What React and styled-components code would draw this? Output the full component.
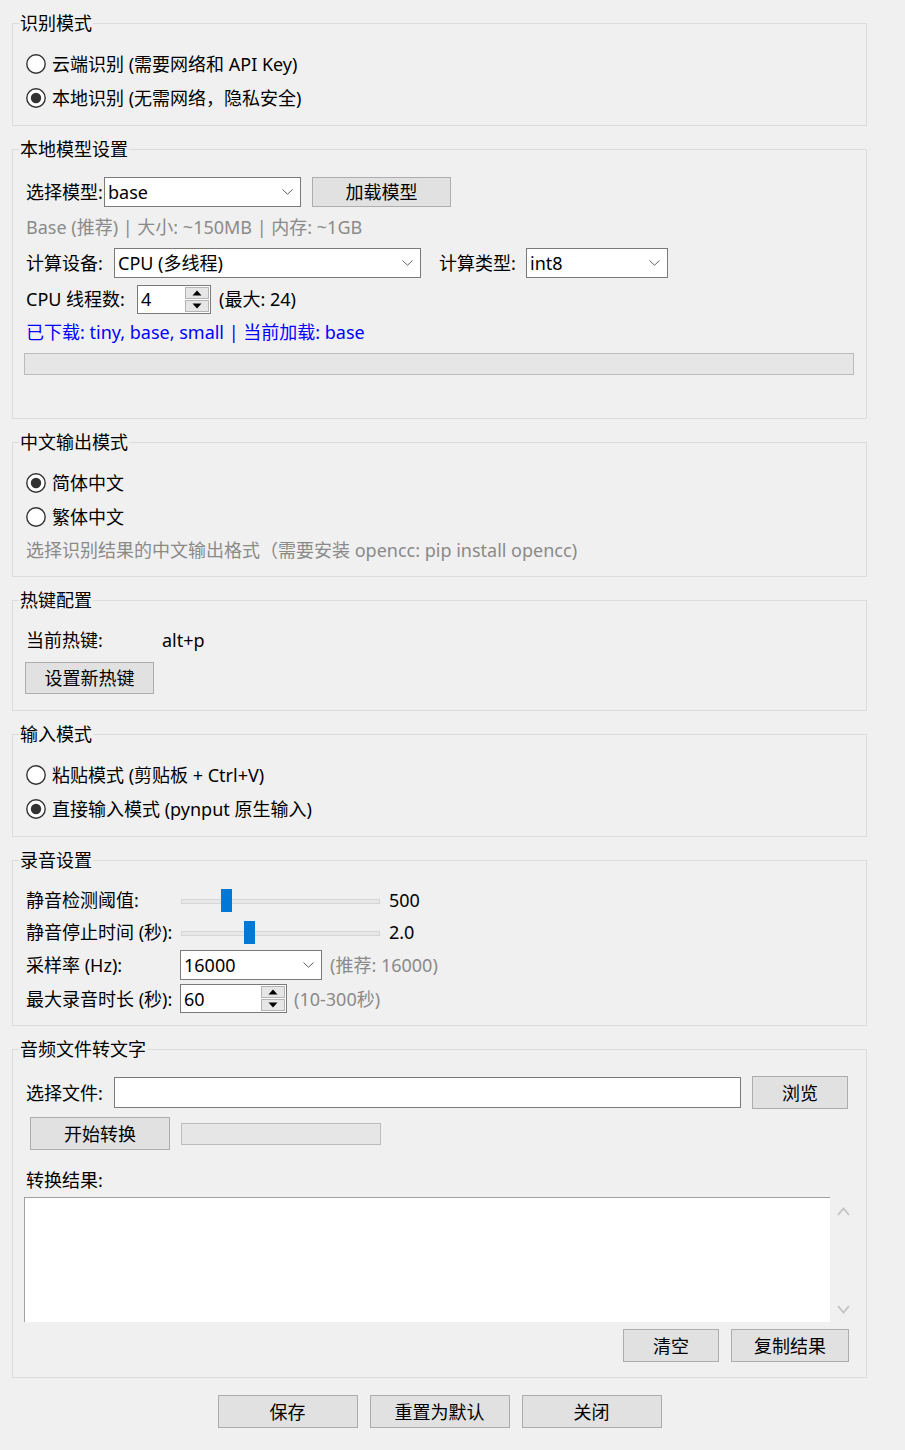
import React from "react";
import styled, { createGlobalStyle } from "styled-components";

const Global = createGlobalStyle`
  html, body { margin: 0; padding: 0; background: #f0f0f0; }
  body {
    font-family: "Noto Sans", "Noto Sans CJK SC", sans-serif;
    font-size: 18px;
    color: #000;
  }
  * { box-sizing: border-box; }
`;

const Page = styled.div`
  width: 905px;
  min-height: 1450px;
  padding: 14px 0 0 12px;
  background: #f0f0f0;
`;

const Frames = styled.div`
  width: 855px;
  display: flex;
  flex-direction: column;
  gap: 14px;
`;

const Group = styled.fieldset`
  margin: 0;
  padding: 0;
  min-width: 0;
  border: 1px solid #dcdcdc;
`;

const Legend = styled.legend`
  margin-left: 6px;
  padding: 0 1px;
  height: 18px;
  font-size: 18px;
  line-height: 18px;
  white-space: nowrap;
`;

const Body = styled.div`
  display: flex;
  flex-direction: column;
  padding: ${(p) => p.$pt}px ${(p) => p.$pr ?? 12}px ${(p) => p.$pb}px 12px;
`;

const Row = styled.div`
  display: flex;
  align-items: center;
  height: ${(p) => p.$h ?? 30}px;
  margin-top: ${(p) => p.$mt ?? 0}px;
  margin-left: ${(p) => p.$ml ?? 0}px;
  justify-content: ${(p) => p.$justify ?? "flex-start"};
  gap: ${(p) => p.$gap ?? 0}px;
  line-height: 24px;
  white-space: nowrap;
`;

const Label = styled.span`
  flex: none;
  width: ${(p) => (p.$w ? `${p.$w}px` : "auto")};
  margin-left: ${(p) => p.$ml ?? 0}px;
  padding-left: 1px;
  white-space: nowrap;
`;

const Hint = styled.span`
  color: ${(p) => (p.$blue ? "#0000ff" : "#8a8a8a")};
  margin-left: ${(p) => p.$ml ?? 0}px;
  white-space: nowrap;
`;

const TextLine = styled.div`
  height: 24px;
  line-height: 24px;
  margin-top: ${(p) => p.$mt ?? 0}px;
  padding-left: 1px;
  color: ${(p) => (p.$blue ? "#0000ff" : p.$gray ? "#8a8a8a" : "#000")};
  white-space: nowrap;
`;

const RadioRow = styled.label`
  display: flex;
  align-items: center;
  gap: 6px;
  height: 34px;
  padding-left: 1px;
  line-height: 24px;
  white-space: nowrap;
`;

const RadioDot = ({ checked }) => (
  <svg width="20" height="20" viewBox="0 0 20 20" style={{ flex: "none" }}>
    <circle cx="10" cy="10" r="9.2" fill="#fff" stroke="#333" strokeWidth="1.4" />
    {checked && <circle cx="10" cy="10" r="5.2" fill="#333" />}
  </svg>
);

const Radio = ({ checked, children }) => (
  <RadioRow>
    <RadioDot checked={checked} />
    <span>{children}</span>
  </RadioRow>
);

const ComboBox = styled.div`
  flex: none;
  width: ${(p) => p.$w}px;
  height: 30px;
  background: #fff;
  border: 1px solid #7a7a7a;
  display: flex;
  align-items: center;
  justify-content: space-between;
  padding: 0 7px 0 3px;
`;

const Chevron = () => (
  <svg width="11" height="6" viewBox="0 0 11 6">
    <path d="M0.5 0.5 L5.5 5.2 L10.5 0.5" fill="none" stroke="#606060" strokeWidth="1" />
  </svg>
);

const Combo = ({ w, value }) => (
  <ComboBox $w={w}>
    <span>{value}</span>
    <Chevron />
  </ComboBox>
);

const SpinBox = styled.div`
  flex: none;
  width: ${(p) => p.$w}px;
  height: 29px;
  background: #fff;
  border: 1px solid #7a7a7a;
  display: flex;
  align-items: stretch;
  padding: 0 1px 0 3px;
`;

const SpinValue = styled.span`
  flex: 1;
  display: flex;
  align-items: center;
`;

const SpinButtons = styled.div`
  flex: none;
  width: 24px;
  display: flex;
  flex-direction: column;
  gap: 1px;
  padding: 1px 0;
`;

const SpinBtn = styled.div`
  flex: 1;
  background: #e6e6e6;
  border: 1px solid #b4b4b4;
  display: flex;
  align-items: center;
  justify-content: center;
`;

const Triangle = ({ up }) => (
  <svg width="10" height="6" viewBox="0 0 10 6">
    <path d={up ? "M0.5 5.5 L5 0.5 L9.5 5.5 Z" : "M0.5 0.5 L5 5.5 L9.5 0.5 Z"} fill="#000" />
  </svg>
);

const Spin = ({ w, value }) => (
  <SpinBox $w={w}>
    <SpinValue>{value}</SpinValue>
    <SpinButtons>
      <SpinBtn>
        <Triangle up />
      </SpinBtn>
      <SpinBtn>
        <Triangle />
      </SpinBtn>
    </SpinButtons>
  </SpinBox>
);

const Button = styled.button`
  flex: none;
  width: ${(p) => p.$w}px;
  height: ${(p) => p.$h ?? 33}px;
  margin-left: ${(p) => p.$ml ?? 0}px;
  background: #e1e1e1;
  border: 1px solid #adadad;
  border-radius: 0;
  padding: 0;
  font-family: inherit;
  font-size: 18px;
  line-height: 24px;
  color: #000;
  white-space: nowrap;
`;

const Progress = styled.div`
  flex: none;
  width: ${(p) => (p.$w ? `${p.$w}px` : "auto")};
  height: 22px;
  margin-top: ${(p) => p.$mt ?? 0}px;
  margin-left: ${(p) => p.$ml ?? 0}px;
  background: #e6e6e6;
  border: 1px solid #bcbcbc;
`;

const SliderTrack = styled.div`
  flex: none;
  position: relative;
  width: ${(p) => p.$w}px;
  height: 23px;
  margin-right: 9px;
  &::before {
    content: "";
    position: absolute;
    left: 0;
    right: 0;
    top: 10px;
    height: 3px;
    background: #e7e7e7;
    border: 1px solid #d6d6d6;
  }
`;

const SliderThumb = styled.div`
  position: absolute;
  top: 0;
  width: 11px;
  height: 23px;
  background: #0078d7;
`;

const Slider = ({ w, frac }) => (
  <SliderTrack $w={w}>
    <SliderThumb style={{ left: `${Math.round(frac * (w - 11))}px` }} />
  </SliderTrack>
);

const Entry = styled.div`
  flex: none;
  width: ${(p) => p.$w}px;
  height: 31px;
  background: #fff;
  border: 1px solid #7a7a7a;
`;

const TextWrap = styled.div`
  display: flex;
  height: 125px;
  margin: 5px -8px 0 -1px;
`;

const TextArea = styled.div`
  flex: 1;
  background: #fff;
  border-top: 1px solid #a0a0a0;
  border-left: 1px solid #a0a0a0;
`;

const ScrollBar = styled.div`
  flex: none;
  width: 27px;
  display: flex;
  flex-direction: column;
  align-items: center;
  justify-content: space-between;
  padding: 10px 0 8px;
`;

const ScrollArrow = ({ up }) => (
  <svg width="13" height="9" viewBox="0 0 13 9">
    <path
      d={up ? "M1 8 L6.5 1.5 L12 8" : "M1 1 L6.5 7.5 L12 1"}
      fill="none"
      stroke="#c4c4c4"
      strokeWidth="1.8"
    />
  </svg>
);

const Footer = styled.div`
  width: 855px;
  display: flex;
  justify-content: center;
  gap: 12px;
  margin-top: 17px;
`;

export default function App() {
  const thresholdFrac = (500 - 100) / (2000 - 100);
  const silenceFrac = (2.0 - 0.5) / (5.0 - 0.5);
  return (
    <Page>
      <Global />
      <Frames>
        <Group>
          <Legend>识别模式</Legend>
          <Body $pt={15} $pb={10}>
            <Radio>云端识别 (需要网络和 API Key)</Radio>
            <Radio checked>本地识别 (无需网络，隐私安全)</Radio>
          </Body>
        </Group>

        <Group>
          <Legend>本地模型设置</Legend>
          <Body $pt={18} $pb={43}>
            <Row $h={31}>
              <Label $w={79}>选择模型:</Label>
              <Combo w={197} value="base" />
              <Button $w={139} $h={30} $ml={11}>
                加载模型
              </Button>
            </Row>
            <TextLine $mt={8} $gray>
              Base (推荐) | 大小: ~150MB | 内存: ~1GB
            </TextLine>
            <Row $h={31} $mt={8}>
              <Label $w={89}>计算设备:</Label>
              <Combo w={307} value="CPU (多线程)" />
              <Label $w={88} $ml={17}>
                计算类型:
              </Label>
              <Combo w={142} value="int8" />
            </Row>
            <Row $h={30} $mt={6}>
              <Label $w={112}>CPU 线程数:</Label>
              <Spin w={74} value="4" />
              <Label $ml={7}>(最大: 24)</Label>
            </Row>
            <TextLine $mt={6} $blue>
              已下载: tiny, base, small | 当前加载: base
            </TextLine>
            <Progress $mt={9} $ml={-1} />
          </Body>
        </Group>

        <Group>
          <Legend>中文输出模式</Legend>
          <Body $pt={15} $pb={14}>
            <Radio checked>简体中文</Radio>
            <Radio>繁体中文</Radio>
            <TextLine $mt={4} $gray>
              选择识别结果的中文输出格式（需要安装 opencc: pip install opencc)
            </TextLine>
          </Body>
        </Group>

        <Group>
          <Legend>热键配置</Legend>
          <Body $pt={19} $pb={16}>
            <Row $h={24}>
              <Label $w={137}>当前热键:</Label>
              <span>alt+p</span>
            </Row>
            <Row $h={32} $mt={10}>
              <Button $w={129} $h={32}>
                设置新热键
              </Button>
            </Row>
          </Body>
        </Group>

        <Group>
          <Legend>输入模式</Legend>
          <Body $pt={15} $pb={10}>
            <Radio>粘贴模式 (剪贴板 + Ctrl+V)</Radio>
            <Radio checked>直接输入模式 (pynput 原生输入)</Radio>
          </Body>
        </Group>

        <Group>
          <Legend>录音设置</Legend>
          <Body $pt={16} $pb={11}>
            <Row $h={30}>
              <Label $w={156}>静音检测阈值:</Label>
              <Slider w={199} frac={thresholdFrac} />
              <span>500</span>
            </Row>
            <Row $h={30} $mt={2}>
              <Label $w={156}>静音停止时间 (秒):</Label>
              <Slider w={199} frac={silenceFrac} />
              <span>2.0</span>
            </Row>
            <Row $h={31} $mt={2}>
              <Label $w={155}>采样率 (Hz):</Label>
              <Combo w={142} value="16000" />
              <Hint $ml={8}>(推荐: 16000)</Hint>
            </Row>
            <Row $h={31} $mt={3}>
              <Label $w={155}>最大录音时长 (秒):</Label>
              <Spin w={107} value="60" />
              <Hint $ml={7}>(10-300秒)</Hint>
            </Row>
          </Body>
        </Group>

        <Group>
          <Legend>音频文件转文字</Legend>
          <Body $pt={18} $pb={15} $pr={17}>
            <Row $h={33}>
              <Label $w={89}>选择文件:</Label>
              <Entry $w={627} />
              <Button $w={96} $ml={11}>
                浏览
              </Button>
            </Row>
            <Row $h={33} $mt={8}>
              <Button $w={140} $ml={5}>
                开始转换
              </Button>
              <Progress $w={200} $ml={11} />
            </Row>
            <TextLine $mt={18}>转换结果:</TextLine>
            <TextWrap>
              <TextArea />
              <ScrollBar>
                <ScrollArrow up />
                <ScrollArrow />
              </ScrollBar>
            </TextWrap>
            <Row $h={33} $mt={7} $justify="flex-end" $gap={12}>
              <Button $w={96}>清空</Button>
              <Button $w={118}>复制结果</Button>
            </Row>
          </Body>
        </Group>
      </Frames>
      <Footer>
        <Button $w={140}>保存</Button>
        <Button $w={140}>重置为默认</Button>
        <Button $w={140}>关闭</Button>
      </Footer>
    </Page>
  );
}
